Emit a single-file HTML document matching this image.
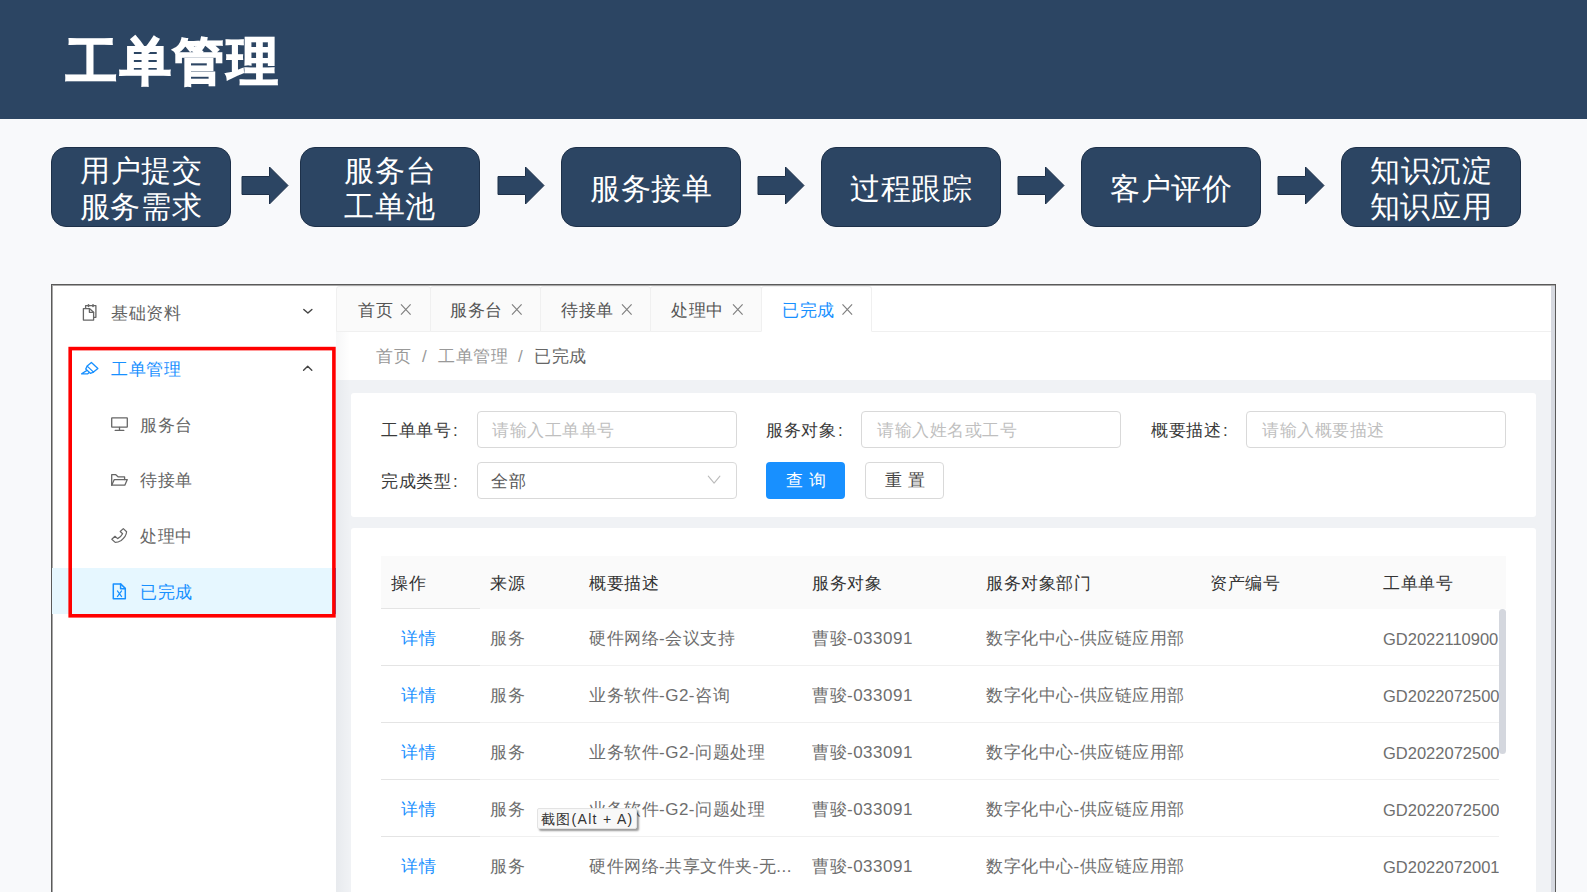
<!DOCTYPE html>
<html><head><meta charset="utf-8">
<style>
*{box-sizing:border-box;margin:0;padding:0}
html,body{width:1587px;height:892px;overflow:hidden;background:#f8f9fb;font-family:"Liberation Sans",sans-serif;position:relative}
.abs{position:absolute}
#hdr{left:0;top:0;width:1587px;height:119px;background:#2c4563}
#title{left:66px;top:27px;font-size:51px;font-weight:bold;color:#fff;line-height:70px;white-space:nowrap;-webkit-text-stroke:1.7px #fff;letter-spacing:2.5px}
.box{position:absolute;top:147px;width:180px;height:80px;background:#2c4563;border:1px solid #1d3049;border-radius:15px;color:#fff;font-size:30px;line-height:36px;letter-spacing:0.7px;text-indent:0.7px;text-align:center;padding-top:3px;display:flex;align-items:center;justify-content:center}
.arrow{position:absolute;top:166px;width:48px;height:40px}
#frame{left:51px;top:284px;width:1505px;height:640px;border:1px solid #5a5a5a;box-shadow:inset 1px 1px 0 #a8a8a8,inset -1px 0 0 #a8a8a8;background:#fff;overflow:hidden}
.t{position:absolute;white-space:nowrap;line-height:20px;letter-spacing:0.5px;margin-top:-1px}
.tab{position:absolute;top:286px;height:46px;background:#fafafa;border:1px solid #f0f0f0;border-radius:3px 3px 0 0}
.tab.act{background:#fff;border-bottom-color:#fff}
.lbl{font-size:17px;color:#3a3a3a}
.inp{position:absolute;border:1px solid #d9d9d9;border-radius:4px;background:#fff}
.ph{font-size:17px;color:#bfbfbf}
.th{font-size:17px;color:#333}
.td{font-size:17px;color:#6e6e6e}
</style></head><body>
<div id="hdr" class="abs"></div>
<div id="title" class="abs">工单管理</div>

<div class="box" style="left:51px">用户提交<br>服务需求</div>
<div class="box" style="left:300px">服务台<br>工单池</div>
<div class="box" style="left:561px">服务接单</div>
<div class="box" style="left:821px">过程跟踪</div>
<div class="box" style="left:1081px">客户评价</div>
<div class="box" style="left:1341px">知识沉淀<br>知识应用</div>

<svg class="arrow" style="left:241px" viewBox="0 0 48 40"><path d="M1 10.5H28.5V1L47 19.5 28.5 38V28.5H1Z" fill="#2c4563" stroke="#1d3049" stroke-width="1"/></svg>
<svg class="arrow" style="left:497px" viewBox="0 0 48 40"><path d="M1 10.5H28.5V1L47 19.5 28.5 38V28.5H1Z" fill="#2c4563" stroke="#1d3049" stroke-width="1"/></svg>
<svg class="arrow" style="left:757px" viewBox="0 0 48 40"><path d="M1 10.5H28.5V1L47 19.5 28.5 38V28.5H1Z" fill="#2c4563" stroke="#1d3049" stroke-width="1"/></svg>
<svg class="arrow" style="left:1017px" viewBox="0 0 48 40"><path d="M1 10.5H28.5V1L47 19.5 28.5 38V28.5H1Z" fill="#2c4563" stroke="#1d3049" stroke-width="1"/></svg>
<svg class="arrow" style="left:1277px" viewBox="0 0 48 40"><path d="M1 10.5H28.5V1L47 19.5 28.5 38V28.5H1Z" fill="#2c4563" stroke="#1d3049" stroke-width="1"/></svg>

<div id="frame" class="abs"></div>
<!-- sidebar -->
<div class="abs" style="left:52px;top:568px;width:284px;height:46px;background:#e6f7ff;border-right:3px solid #1890ff"></div>
<div class="t" style="left:111px;top:305px;font-size:17px;color:#636363">基础资料</div>
<div class="t" style="left:111px;top:361px;font-size:17px;color:#1890ff">工单管理</div>
<div class="t" style="left:140px;top:417px;font-size:17px;color:#666">服务台</div>
<div class="t" style="left:140px;top:472px;font-size:17px;color:#666">待接单</div>
<div class="t" style="left:140px;top:528px;font-size:17px;color:#666">处理中</div>
<div class="t" style="left:140px;top:584px;font-size:17px;color:#1890ff">已完成</div>
<!-- content -->
<div class="abs" style="left:336px;top:286px;width:1215px;height:606px;background:#f0f2f5"></div>
<div class="abs" style="left:336px;top:286px;width:1215px;height:94px;background:#fff"></div>
<div class="abs" style="left:336px;top:331px;width:1215px;height:1px;background:#f0f0f0"></div>
<div class="abs" style="left:1551px;top:286px;width:4px;height:606px;background:#d6d9e0"></div>
<div class="abs" style="left:336px;top:332px;width:14px;height:560px;background:linear-gradient(to right,rgba(0,20,40,.035),rgba(0,20,40,0))"></div>
<!-- tabs -->
<div class="tab" style="left:336px;width:95px"></div>
<div class="tab" style="left:430px;width:111px"></div>
<div class="tab" style="left:540px;width:111px"></div>
<div class="tab" style="left:650px;width:112px"></div>
<div class="tab act" style="left:761px;width:111px"></div>
<div class="t" style="left:358px;top:302px;font-size:17px;color:#555">首页</div>
<div class="t" style="left:450px;top:302px;font-size:17px;color:#555">服务台</div>
<div class="t" style="left:561px;top:302px;font-size:17px;color:#555">待接单</div>
<div class="t" style="left:671px;top:302px;font-size:17px;color:#555">处理中</div>
<div class="t" style="left:782px;top:302px;font-size:17px;color:#1890ff">已完成</div>
<!-- breadcrumb -->
<div class="t" style="left:376px;top:348px;font-size:17px;color:#999">首页</div>
<div class="t" style="left:422px;top:348px;font-size:17px;color:#999">/</div>
<div class="t" style="left:438px;top:348px;font-size:17px;color:#999">工单管理</div>
<div class="t" style="left:518px;top:348px;font-size:17px;color:#999">/</div>
<div class="t" style="left:534px;top:348px;font-size:17px;color:#666">已完成</div>
<!-- form card -->
<div class="abs" style="left:351px;top:393px;width:1185px;height:124px;background:#fff;border-radius:3px"></div>
<div class="abs" style="left:351px;top:528px;width:1185px;height:400px;background:#fff;border-radius:3px"></div>
<div class="t lbl" style="left:381px;top:422px">工单单号<span style="margin-left:2px">:</span></div>
<div class="t lbl" style="left:766px;top:422px">服务对象<span style="margin-left:2px">:</span></div>
<div class="t lbl" style="left:1151px;top:422px">概要描述<span style="margin-left:2px">:</span></div>
<div class="t lbl" style="left:381px;top:473px">完成类型<span style="margin-left:2px">:</span></div>
<div class="inp" style="left:477px;top:411px;width:260px;height:37px"></div>
<div class="inp" style="left:861px;top:411px;width:260px;height:37px"></div>
<div class="inp" style="left:1246px;top:411px;width:260px;height:37px"></div>
<div class="inp" style="left:477px;top:462px;width:260px;height:37px"></div>
<div class="t ph" style="left:492px;top:422px">请输入工单单号</div>
<div class="t ph" style="left:877px;top:422px">请输入姓名或工号</div>
<div class="t ph" style="left:1262px;top:422px">请输入概要描述</div>
<div class="t" style="left:491px;top:473px;font-size:17px;color:#555">全部</div>
<div class="abs" style="left:766px;top:462px;width:79px;height:37px;background:#1890ff;border-radius:4px"></div>
<div class="t" style="left:786px;top:472px;font-size:17px;color:#fff">查 询</div>
<div class="inp" style="left:865px;top:462px;width:79px;height:37px"></div>
<div class="t" style="left:885px;top:472px;font-size:17px;color:#444">重 置</div>
<!-- table -->
<div class="abs" style="left:381px;top:556px;width:1125px;height:53px;background:#fafafa"></div>
<div class="t th" style="left:391px;top:575px">操作</div>
<div class="t th" style="left:490px;top:575px">来源</div>
<div class="t th" style="left:589px;top:575px">概要描述</div>
<div class="t th" style="left:812px;top:575px">服务对象</div>
<div class="t th" style="left:986px;top:575px">服务对象部门</div>
<div class="t th" style="left:1210px;top:575px">资产编号</div>
<div class="t th" style="left:1383px;top:575px">工单单号</div>
<div class="abs" style="left:381px;top:665px;width:1118px;height:1px;background:#f0f0f0"></div>
<div class="t" style="left:401px;top:630px;font-size:17px;color:#1890ff">详情</div>
<div class="t td" style="left:490px;top:630px">服务</div>
<div class="t td" style="left:589px;top:630px">硬件网络-会议支持</div>
<div class="t td" style="left:812px;top:630px">曹骏-033091</div>
<div class="t td" style="left:986px;top:630px">数字化中心-供应链应用部</div>
<div class="t td" style="left:1383px;top:630px;width:116px;overflow:hidden;letter-spacing:0;font-size:16.5px">GD2022110900</div>
<div class="abs" style="left:381px;top:722px;width:1118px;height:1px;background:#f0f0f0"></div>
<div class="t" style="left:401px;top:687px;font-size:17px;color:#1890ff">详情</div>
<div class="t td" style="left:490px;top:687px">服务</div>
<div class="t td" style="left:589px;top:687px">业务软件-G2-咨询</div>
<div class="t td" style="left:812px;top:687px">曹骏-033091</div>
<div class="t td" style="left:986px;top:687px">数字化中心-供应链应用部</div>
<div class="t td" style="left:1383px;top:687px;width:116px;overflow:hidden;letter-spacing:0;font-size:16.5px">GD2022072500</div>
<div class="abs" style="left:381px;top:779px;width:1118px;height:1px;background:#f0f0f0"></div>
<div class="t" style="left:401px;top:744px;font-size:17px;color:#1890ff">详情</div>
<div class="t td" style="left:490px;top:744px">服务</div>
<div class="t td" style="left:589px;top:744px">业务软件-G2-问题处理</div>
<div class="t td" style="left:812px;top:744px">曹骏-033091</div>
<div class="t td" style="left:986px;top:744px">数字化中心-供应链应用部</div>
<div class="t td" style="left:1383px;top:744px;width:116px;overflow:hidden;letter-spacing:0;font-size:16.5px">GD2022072500</div>
<div class="abs" style="left:381px;top:836px;width:1118px;height:1px;background:#f0f0f0"></div>
<div class="t" style="left:401px;top:801px;font-size:17px;color:#1890ff">详情</div>
<div class="t td" style="left:490px;top:801px">服务</div>
<div class="t td" style="left:589px;top:801px">业务软件-G2-问题处理</div>
<div class="t td" style="left:812px;top:801px">曹骏-033091</div>
<div class="t td" style="left:986px;top:801px">数字化中心-供应链应用部</div>
<div class="t td" style="left:1383px;top:801px;width:116px;overflow:hidden;letter-spacing:0;font-size:16.5px">GD2022072500</div>
<div class="abs" style="left:381px;top:893px;width:1118px;height:1px;background:#f0f0f0"></div>
<div class="t" style="left:401px;top:858px;font-size:17px;color:#1890ff">详情</div>
<div class="t td" style="left:490px;top:858px">服务</div>
<div class="t td" style="left:589px;top:858px">硬件网络-共享文件夹-无...</div>
<div class="t td" style="left:812px;top:858px">曹骏-033091</div>
<div class="t td" style="left:986px;top:858px">数字化中心-供应链应用部</div>
<div class="t td" style="left:1383px;top:858px;width:116px;overflow:hidden;letter-spacing:0;font-size:16.5px">GD2022072001</div>
<div class="abs" style="left:381px;top:608px;width:99px;height:1px;background:#e4e4e4"></div>
<div class="abs" style="left:381px;top:665px;width:99px;height:1px;background:#e4e4e4"></div>
<div class="abs" style="left:381px;top:722px;width:99px;height:1px;background:#e4e4e4"></div>
<div class="abs" style="left:381px;top:779px;width:99px;height:1px;background:#e4e4e4"></div>
<div class="abs" style="left:381px;top:836px;width:99px;height:1px;background:#e4e4e4"></div>
<div class="abs" style="left:1499px;top:609px;width:7px;height:145px;background:#d4d7de;border-radius:4px"></div>
<!-- red box -->
<svg class="abs" style="left:0;top:0" width="1587" height="892"><rect x="70.2" y="348.6" width="263.7" height="267.2" fill="none" stroke="#ff0000" stroke-width="3.6"/></svg>
<!-- tooltip -->
<div class="abs" style="left:537px;top:808px;width:100px;height:21px;background:#f8f8f8;border:1px solid #e3e3e3;border-radius:2px;box-shadow:2px 2px 2px rgba(0,0,0,.4)"></div>
<div class="t" style="left:541px;top:810px;font-size:14px;color:#333;letter-spacing:1.3px">截图(Alt + A)</div>

<svg class="abs" style="left:0;top:0;pointer-events:none" width="1587" height="892" viewBox="0 0 1587 892" fill="none" stroke-linecap="round" stroke-linejoin="round">
<g stroke="#666" stroke-width="1.3">
<path d="M85.6 308.3V305.7H95.9V317.3H93.6"/>
<path d="M83.4 308.6H89.4L93.6 312.3V320.1H83.4Z"/>
<path d="M89.4 308.6V312.3H93.6"/>
<path d="M88.5 304.8V306.4M93 304.8V306.4" stroke-width="1.6"/>
</g>
<g stroke="#1890ff" stroke-width="1.3">
<path d="M91.4 362.4L97.9 368.4L93.5 372.1L87.2 366.1Z"/>
<path d="M87.2 366.1L85.7 369.1L90.4 373.3L93.5 372.1"/>
<path d="M86.6 370.6L81.6 373.8H87.8L89.2 372.6"/>
</g>
<g stroke="#444" stroke-width="1.4">
<path d="M303.8 309.4L307.9 313.1L311.9 309.4"/>
<path d="M303.6 370.2L307.7 366.3L311.8 370.2"/>
</g>
<g stroke="#666" stroke-width="1.3">
<rect x="111.7" y="417.9" width="15.6" height="9.2" rx="0.3"/>
<path d="M119.5 427.3V430.2M115.2 430.4H123.8"/>
<path d="M111.7 485.2V474.7H115.8L118.3 476.9H124.6V479.5"/>
<path d="M111.7 485.2L114.3 479.6H127.3L124.8 485.2Z"/>
<path d="M123.3 528.6L126.6 531.8Q126.2 536.8 121.2 540.4Q118 542.4 115.2 542.4L111.8 539.3L115 536.3L117.6 538.6Q121 537 122.6 533.8L120.2 531.5Z" stroke-width="1.2"/>
</g>
<g stroke="#1890ff" stroke-width="1.5">
<path d="M113.3 583.9H120.6L125.3 588.4V598.8H113.3Z"/>
<path d="M120.6 583.9V588.7H125.3"/>
<path d="M117.4 590.9L121.6 596.6M121.6 590.9L117.4 596.6" stroke-width="1.2"/>
</g>
<g stroke="#808080" stroke-width="1.2" stroke-linecap="butt">
<path d="M401 304.4L410.6 314.6M410.6 304.4L401 314.6"/>
<path d="M512 304.4L521.6 314.6M521.6 304.4L512 314.6"/>
<path d="M622 304.4L631.6 314.6M631.6 304.4L622 314.6"/>
<path d="M733 304.4L742.6 314.6M742.6 304.4L733 314.6"/>
<path d="M842.5 304.4L852.1 314.6M852.1 304.4L842.5 314.6"/>
</g>
<path d="M708.3 476.2L714.1 483.2L719.9 476.2" stroke="#bbb" stroke-width="1.1"/>
</svg>
</body></html>
